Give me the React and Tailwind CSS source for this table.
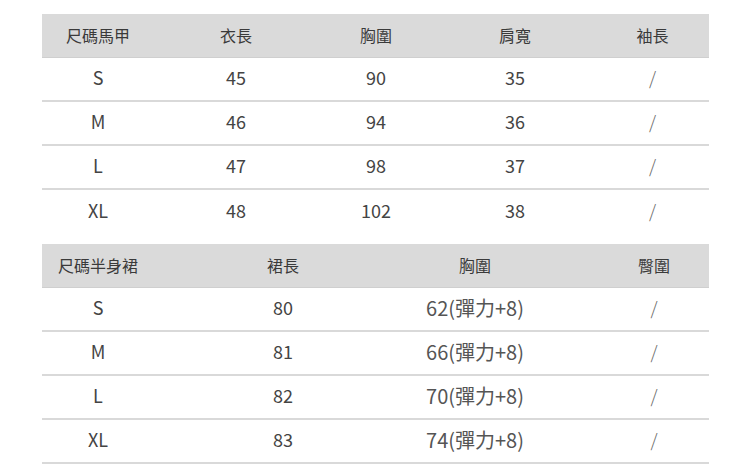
import React from 'react';

const vest = {
  head: ['尺碼馬甲', '衣長', '胸圍', '肩寬', '袖長'],
  rows: [
    ['S', '45', '90', '35', '/'],
    ['M', '46', '94', '36', '/'],
    ['L', '47', '98', '37', '/'],
    ['XL', '48', '102', '38', '/'],
  ],
};

const skirt = {
  head: ['尺碼半身裙', '裙長', '胸圍', '臀圍'],
  rows: [
    ['S', '80', '62(彈力+8)', '/'],
    ['M', '81', '66(彈力+8)', '/'],
    ['L', '82', '70(彈力+8)', '/'],
    ['XL', '83', '74(彈力+8)', '/'],
  ],
};

const font = "font-['Noto_Sans_CJK_TC','Noto_Sans',sans-serif]";

export default function App() {
  return (
    <div className={`w-[750px] h-[471px] bg-white overflow-hidden pl-[42px] pt-[14px] ${font}`}>
      {/* 馬甲 */}
      <div className="w-[667px]">
        <div className="grid grid-cols-[112px_164px_116px_162px_113px] h-[44px] pb-[2px] items-center bg-[#dadada] border-b border-[#cfcfcf] text-[16px] text-[#3a3a3a]">
          {vest.head.map((h) => (
            <div key={h} className="text-center">{h}</div>
          ))}
        </div>
        {vest.rows.map((r, i) => (
          <div
            key={r[0]}
            className={`grid grid-cols-[112px_164px_116px_162px_113px] h-[44px] pb-[3px] items-center text-[18px] text-[#444] ${
              i < vest.rows.length - 1 ? 'border-b-2 border-[#d9d9d9]' : ''
            }`}
          >
            {r.map((c, j) => (
              <div key={j} className={`text-center ${c === '/' ? 'text-[#666] font-light' : ''}`}>{c}</div>
            ))}
          </div>
        ))}
      </div>

      {/* 半身裙 */}
      <div className="w-[667px] mt-[10px]">
        <div className="grid grid-cols-[112px_258px_187px_110px] h-[44px] pb-[2px] items-center bg-[#dadada] border-b border-[#cfcfcf] text-[16px] text-[#3a3a3a]">
          <div className="text-center">{skirt.head[0]}</div>
          <div className="text-center">{skirt.head[1]}</div>
          <div className="text-center pr-[61px]">{skirt.head[2]}</div>
          <div className="text-center">{skirt.head[3]}</div>
        </div>
        {skirt.rows.map((r) => (
          <div
            key={r[0]}
            className="grid grid-cols-[112px_258px_187px_110px] h-[44px] pb-[3px] items-center text-[18px] text-[#444] border-b-2 border-[#d9d9d9]"
          >
            <div className="text-center">{r[0]}</div>
            <div className="text-center">{r[1]}</div>
            <div className="text-center pr-[61px] text-[20px] text-[#555]">{r[2]}</div>
            <div className="text-center text-[#666] font-light">{r[3]}</div>
          </div>
        ))}
      </div>
    </div>
  );
}
